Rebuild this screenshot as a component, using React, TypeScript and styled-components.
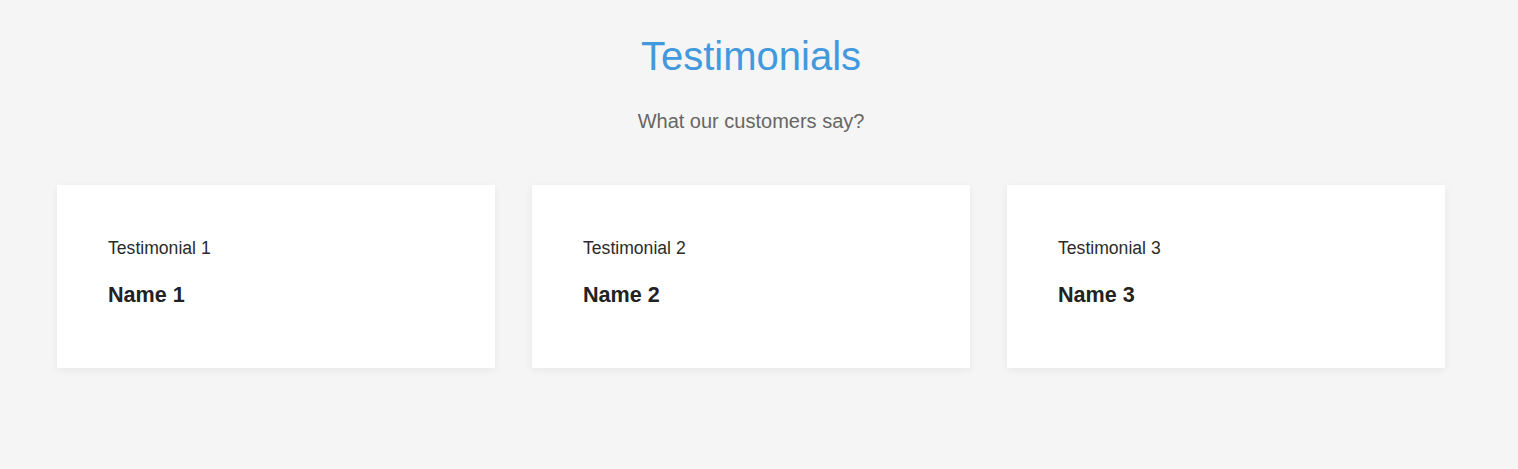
import React from "react";
import styled, { createGlobalStyle } from "styled-components";

const GlobalStyle = createGlobalStyle`
  html, body {
    margin: 0;
    padding: 0;
    background: #f5f5f5;
    font-family: "Liberation Sans", Arial, sans-serif;
  }
`;

const Section = styled.section`
  box-sizing: border-box;
  width: 1518px;
  min-height: 469px;
  padding: 34px 73px 0 57px;
  background: #f5f5f5;
  text-align: center;
`;

const Title = styled.h1`
  margin: 0;
  font-size: 40px;
  font-weight: 400;
  line-height: 1.117;
  color: #4299dd;
`;

const Subtitle = styled.p`
  margin: 31px 0 0;
  font-size: 20px;
  line-height: 1.117;
  color: #666666;
`;

const Grid = styled.div`
  display: grid;
  grid-template-columns: repeat(3, 438px);
  column-gap: 37px;
  margin-top: 53px;
  text-align: left;
`;

const Card = styled.div`
  box-sizing: border-box;
  height: 183px;
  padding: 54px 50px 0 51px;
  background: #ffffff;
  box-shadow: 0 2px 8px rgba(0, 0, 0, 0.06);
`;

const Quote = styled.p`
  margin: 0;
  font-size: 17.6px;
  line-height: 1.117;
  color: #2b2b2b;
`;

const Name = styled.h3`
  margin: 24px 0 0;
  font-size: 21.6px;
  font-weight: 700;
  line-height: 1.117;
  color: #222222;
`;

const items = [
  { text: "Testimonial 1", name: "Name 1" },
  { text: "Testimonial 2", name: "Name 2" },
  { text: "Testimonial 3", name: "Name 3" },
];

export default function App() {
  return (
    <>
      <GlobalStyle />
      <Section>
        <Title>Testimonials</Title>
        <Subtitle>What our customers say?</Subtitle>
        <Grid>
          {items.map((it) => (
            <Card key={it.name}>
              <Quote>{it.text}</Quote>
              <Name>{it.name}</Name>
            </Card>
          ))}
        </Grid>
      </Section>
    </>
  );
}
